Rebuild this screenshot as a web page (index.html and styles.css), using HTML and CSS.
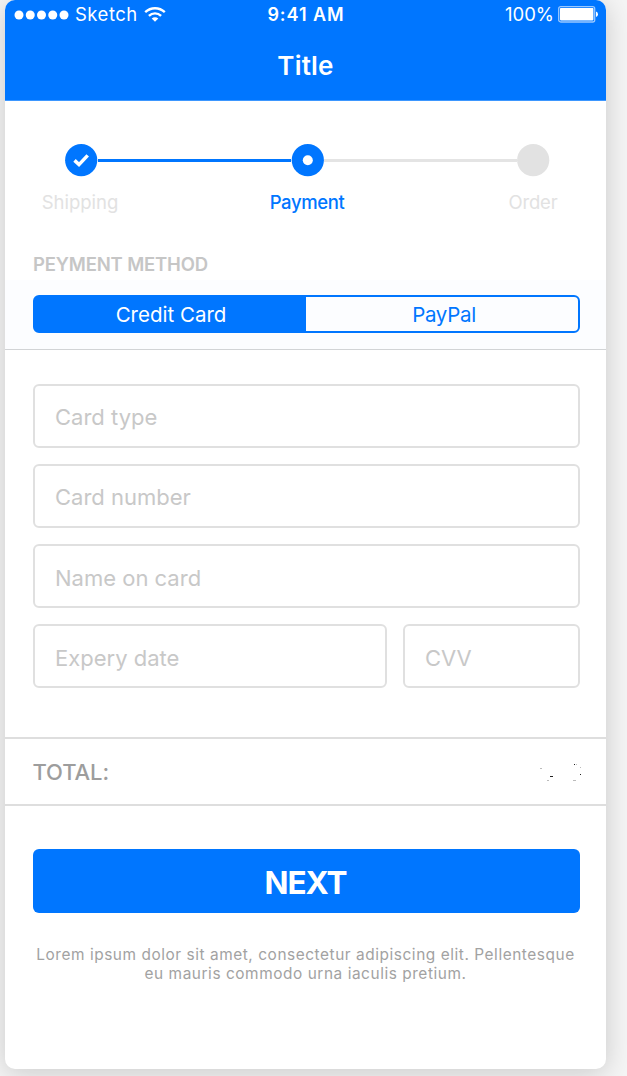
FILE: index.html
```html
<!DOCTYPE html>
<html lang="en">
<head>
<meta charset="utf-8">
<title>Title</title>
<link rel="stylesheet" href="styles.css">
</head>
<body>
<main class="phone">
  <header class="header">
    <div class="status">
      <div class="carrier">
        <svg class="signal" width="56" height="10" viewBox="0 0 56 10" fill="#fff"><circle cx="5" cy="5" r="4.5"/><circle cx="16.25" cy="5" r="4.5"/><circle cx="27.5" cy="5" r="4.5"/><circle cx="38.75" cy="5" r="4.5"/><circle cx="50" cy="5" r="4.5"/></svg>
        <span class="network">Sketch</span>
        <svg class="wifi" width="22" height="15" viewBox="0 0 22 15" fill="none" stroke="#fff" stroke-width="2.4"><path d="M1.2 5.2C6.8-.1 15.2-.1 20.8 5.2"/><path d="M4.9 8.8c3.5-3.3 8.7-3.3 12.2 0"/><path d="M11 14.7 7.7 11.4c1.9-1.7 4.7-1.7 6.6 0z" fill="#fff" stroke="none"/></svg>
      </div>
      <span class="clock">9:41 AM</span>
      <div class="power">
        <span class="percent">100%</span>
        <svg class="battery" width="40" height="17" viewBox="0 0 40 17"><rect x=".7" y=".7" width="36" height="15.3" rx="2" fill="none" stroke="#99c8ff" stroke-width="1.3"/><rect x="2" y="2" width="33.4" height="12.4" rx=".8" fill="#fff"/><path d="M38 5.5q2 .5 2 2.8t-2 2.7z" fill="#fff"/></svg>
      </div>
    </div>
    <h1 class="title">Title</h1>
  </header>

  <section class="progress">
    <div class="track">
      <svg width="33" height="33" viewBox="0 0 33 33"><circle cx="16.2" cy="16.2" r="16.1" fill="#0076ff"/><path d="m9.5 16.4 4.5 4.2 8.7-9.2" fill="none" stroke="#fff" stroke-width="3.5"/></svg>
      <span class="link link-done"></span>
      <svg width="33" height="33" viewBox="0 0 33 33"><circle cx="16.8" cy="16.2" r="16.1" fill="#0076ff"/><circle cx="16.8" cy="16.2" r="5" fill="#fff"/></svg>
      <span class="link"></span>
      <svg width="33" height="33" viewBox="0 0 33 33"><circle cx="16.2" cy="16.2" r="16.1" fill="#e2e2e2"/></svg>
    </div>
    <div class="labels">
      <span class="label shipping">Shipping</span>
      <span class="label payment">Payment</span>
      <span class="label order">Order</span>
    </div>
  </section>

  <h2 class="heading">PEYMENT METHOD</h2>
  <section class="method">
    <div class="segments">
      <div class="segment selected">Credit Card</div>
      <div class="segment paypal">PayPal</div>
    </div>
  </section>

  <form class="form">
    <div class="field raised">Card type</div>
    <div class="field raised">Card number</div>
    <div class="field">Name on card</div>
    <div class="row">
      <div class="field date">Expery date</div>
      <div class="field cvv">CVV</div>
    </div>
  </form>

  <section class="total">
    <span class="total-label">TOTAL:</span>
    <svg class="amount" width="42" height="20" viewBox="0 0 42 20" shape-rendering="crispEdges"><path fill="#222" d="M10 12h3v1h-3zM34 0h1v1h-1zM40 10h1v1h-1z"/><path fill="#bbb" d="M0 4h2v1H0zM7 16h2v1H7zM33 16h3v1h-3zM36 0h1v1h-1zM40 3h1v1h-1z"/></svg>
  </section>

  <div class="next">NEXT</div>
  <p class="note">Lorem ipsum dolor sit amet, consectetur adipiscing elit. Pellentesque<br>eu mauris commodo urna iaculis pretium.</p>
</main>
</body>
</html>
```
FILE: styles.css
```css
* { box-sizing: border-box; }
html { background: #f5f5f5; }
body {
  margin: 0;
  height: 1076px;
  padding-left: 5px;
  overflow: hidden;
  font-family: Inter, "Liberation Sans", sans-serif;
}
svg { display: block; flex: none; }
.phone {
  width: 601px;
  height: 1069px;
  background: #fff;
  border-radius: 10px;
  overflow: hidden;
  box-shadow: 0 4px 28px rgba(0, 0, 0, .18);
  white-space: nowrap;
}
.header {
  height: 101px;
  background: #0076ff;
  border-bottom: 1px solid #3d97ff;
  color: #fff;
}
.status {
  display: grid;
  grid-template-columns: 1fr auto 1fr;
  height: 30px;
  padding: 0 8px 0 9px;
  align-items: center;
  font-size: 18.5px;
  line-height: 28px;
}
.carrier, .power { display: flex; align-items: center; }
.carrier { gap: 5px; }
.power { justify-content: flex-end; gap: 4px; }
.network, .percent { margin-bottom: 2px; }
.signal { margin-top: -1px; }
.network { letter-spacing: .5px; }
.wifi { margin: -2px 0 0 1px; }
.battery { margin-top: -1px; }
.clock {
  font-weight: 600;
  font-size: 18px;
  letter-spacing: .95px;
}
.percent { letter-spacing: 0; }
.title {
  margin: 16px 0 0;
  text-align: center;
  font-size: 26px;
  line-height: 40px;
  font-weight: 600;
  letter-spacing: .2px;
}
.progress { height: 151px; padding-top: 43px; }
.track { display: flex; align-items: center; padding: 0 56px 0 60px; }
.link { flex: 1; height: 3px; background: #e4e4e4; }
.link-done { background: #0076ff; }
.labels {
  display: grid;
  grid-template-columns: 150px 1fr 147px;
  text-align: center;
  margin-top: 10px;
  font-size: 18.5px;
  line-height: 30px;
  color: #e2e2e2;
}
.labels .payment { color: #0076ff; font-weight: 500; letter-spacing: -.4px; }
.labels .order { padding-left: 1px; letter-spacing: -.2px; }
.heading {
  margin: 0;
  height: 28px;
  padding-left: 28px;
  font-size: 18.5px;
  line-height: 25px;
  font-weight: 600;
  letter-spacing: -.17px;
  color: #c6c6c6;
}
.method {
  height: 70px;
  padding: 15px 26px 0 28px;
  background: #fcfdff;
  border-bottom: 1px solid #d2d4d6;
}
.segments {
  display: flex;
  height: 38px;
  border: 2px solid #0076ff;
  border-radius: 6px;
  background: linear-gradient(90deg, #0076ff 50%, transparent 50%);
}
.segment {
  flex: 1;
  text-align: center;
  font-size: 20.5px;
  line-height: 36px;
  color: #0076ff;
}
.selected { color: #fff; padding-left: 2px; }
.paypal { padding-left: 5px; letter-spacing: -.3px; }
.form {
  display: flex;
  flex-direction: column;
  gap: 16.3px;
  padding: 33.5px 26px 0 28px;
  height: 387px;
}
.field {
  height: 64px;
  flex: none;
  border: 2px solid #e0e0e0;
  border-radius: 6px;
  padding-left: 20px;
  font-size: 22px;
  line-height: 64px;
  color: #c8c8c8;
}
.raised { line-height: 62px; }
.row { display: flex; gap: 16px; }
.date { width: 354px; }
.cvv { flex: 1; }
.total {
  height: 69px;
  display: flex;
  justify-content: space-between;
  align-items: center;
  padding: 1px 24px 0 28px;
  border-top: 2px solid #dedede;
  border-bottom: 2px solid #dedede;
  font-size: 22px;
  font-weight: 500;
  letter-spacing: -.1px;
  color: #9d9d9d;
}
.total-label { margin: -1px 0 0 -.5px; }
.amount { margin-top: 4px; }
.next {
  margin: 43px 26px 0 28px;
  height: 64px;
  padding-right: 2px;
  border-radius: 6px;
  background: #0076ff;
  color: #fff;
  text-align: center;
  font-size: 31.5px;
  line-height: 68px;
  font-weight: 700;
  letter-spacing: -1px;
}
.note {
  margin: 32px 0 0;
  text-align: center;
  font-size: 15.4px;
  line-height: 19px;
  letter-spacing: .56px;
  color: #a2a2a2;
}
```
